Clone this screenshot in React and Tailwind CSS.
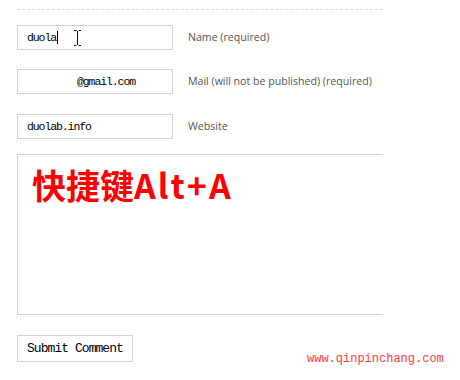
import React from 'react';

const fields = [
  { id: 'author', value: 'duola', label: 'Name (required)', caret: true },
  { id: 'email', value: '@gmail.com', label: 'Mail (will not be published) (required)', indent: true },
  { id: 'url', value: 'duolab.info', label: 'Website' },
];

const IBeam = () => (
  <svg width="9" height="16" viewBox="0 0 9 16" className="ml-[15px]">
    <path d="M1 0.5h2.5M5.5 0.5H8M4.5 1v14M1 15.5h2.5M5.5 15.5H8" stroke="#111" strokeWidth="1" fill="none" />
  </svg>
);

const Field = ({ field, top }) => (
  <div className={`flex items-center ${top}`}>
    <div
      className={`flex items-center w-[156px] h-[25px] border border-[#d2d2d2] bg-white text-[11.5px] tracking-[-1.1px] text-black ${
        field.indent ? 'pl-[59px]' : 'pl-[9px]'
      }`}
      style={{ fontFamily: '"Liberation Mono", monospace' }}
    >
      <span>{field.value}</span>
      {field.caret && (
        <>
          <span className="w-px h-[13px] bg-black ml-px" />
          <IBeam />
        </>
      )}
    </div>
    <label
      htmlFor={field.id}
      className="ml-[15px] text-[10.6px] text-[#555]"
      style={{ fontFamily: '"Open Sans", sans-serif' }}
    >
      {field.label}
    </label>
  </div>
);

export default function App() {
  return (
    <div className="relative w-[460px] h-[380px] bg-white overflow-hidden">
      <div className="flex flex-col pl-[17px] pt-[9px]">
        <div className="w-[366px] border-t border-dashed border-[#dcdcdc]" />

        <Field field={fields[0]} top="mt-[15px]" />
        <Field field={fields[1]} top="mt-[19px]" />
        <Field field={fields[2]} top="mt-[20px]" />

        {/* Comment box */}
        <div className="mt-[15px] w-[366px] h-[161px] border-l border-t border-b border-[#d2d2d2] pl-[14px] pt-[10px]">
          <div
            className="text-[34px] leading-[40px] font-bold text-[#f00]"
            style={{ fontFamily: '"Noto Sans CJK SC", sans-serif' }}
          >
            快捷键<span className="tracking-[2px]">Alt+A</span>
          </div>
        </div>

        <div className="mt-[19px]">
          <button
            className="w-[116px] h-[27px] border border-[#d2d2d2] bg-white text-[13px] tracking-[-0.95px] text-black text-left pl-[9px]"
            style={{ fontFamily: '"Liberation Mono", monospace' }}
          >
            Submit Comment
          </button>
        </div>
      </div>

      {/* Watermark */}
      <div
        className="absolute left-[307px] top-[350px] text-[12px] text-[#ff3a3a]"
        style={{ fontFamily: '"Liberation Mono", monospace' }}
      >
        www.qinpinchang.com
      </div>
    </div>
  );
}
